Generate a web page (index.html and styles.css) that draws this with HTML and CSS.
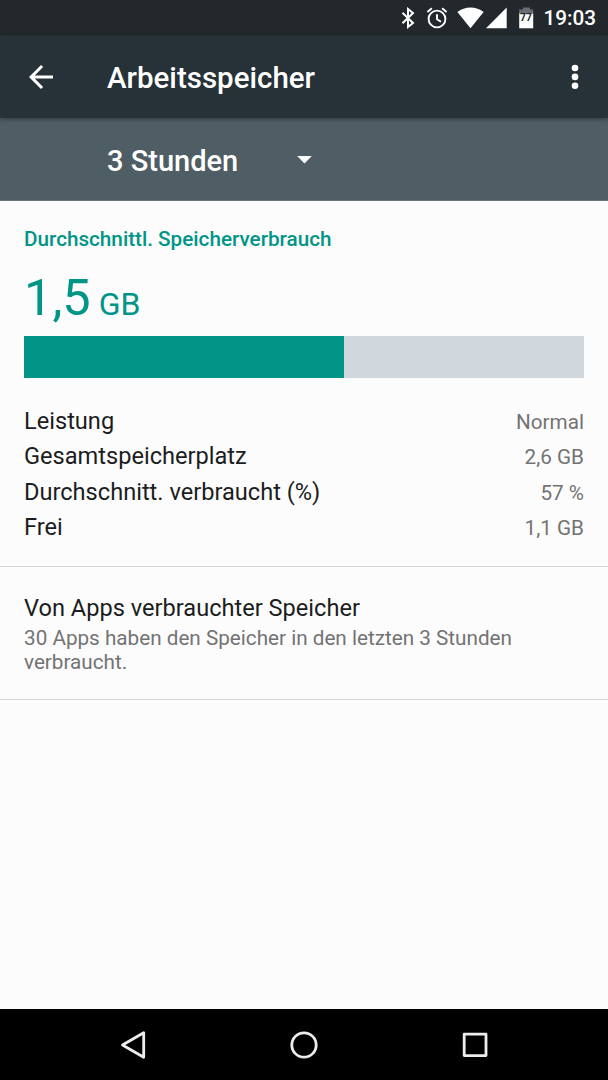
FILE: index.html
```html
<!DOCTYPE html>
<html lang="de">
<head>
    <meta charset="UTF-8">
    <meta name="viewport" content="width=device-width, initial-scale=1.0">
    <title>Arbeitsspeicher</title>
    <link rel="stylesheet" href="styles.css">
</head>
<body>

    <div class="statusbar">
        <svg class="bluetooth" width="14" height="22" viewBox="0 0 14 22" fill="none" stroke="#fff" stroke-width="2">
            <path d="M1.500 5.800l10.500 10.200-5 4V2l5 4L1.500 16.200"/>
        </svg>
        <svg class="alarm" width="22" height="22" viewBox="0 0 22 22" fill="none" stroke="#fff" stroke-width="1.9">
            <circle cx="11" cy="12" r="8.4"/>
            <path d="M11 7.3v5l4 2.4M1.4 5l4.500-3.700M20.600 5l-4.500-3.700"/>
        </svg>
        <svg class="wifi" width="27" height="22" viewBox="0 0 27 22" fill="#fff">
            <path d="M13.500 21.300L.4 5C4.200 2.200 8.600.6 13.500.6S22.800 2.200 26.600 5z"/>
        </svg>
        <svg class="signal" width="21" height="22" viewBox="0 0 21 22" fill="#fff">
            <path d="M0 21.300L20.700.6v20.700z"/>
        </svg>
        <div class="battery">
            <svg width="15" height="22" viewBox="0 0 15 22">
                <path d="M4 .5h7v2h3.200V7H.2V2.500H4z" fill="#6b6e70"/>
                <path d="M.2 6.500h14v14.800H.2z" fill="#fff"/>
            </svg>
            <span>77</span>
        </div>
        <span class="clock">19:03</span>
    </div>

    <div class="toolbar">
        <svg class="back" width="36" height="36" viewBox="0 0 24 24" fill="#fff">
            <path d="M20 11H7.830l5.590-5.590L12 4l-8 8 8 8 1.410-1.410L7.830 13H20v-2z"/>
        </svg>
        <h1>Arbeitsspeicher</h1>
        <svg class="more" width="8" height="26" viewBox="0 0 8 26" fill="#fff">
            <circle cx="4" cy="4" r="3.300"/>
            <circle cx="4" cy="12.900" r="3.300"/>
            <circle cx="4" cy="21.800" r="3.300"/>
        </svg>
    </div>

    <div class="spinner">
        <span>3 Stunden</span>
        <svg width="15" height="8" viewBox="0 0 15 8" fill="#fff">
            <path d="M.2 0h14.600L7.500 7.500z"/>
        </svg>
    </div>

    <main>
        <section class="verbrauch">
            <h2>Durchschnittl. Speicherverbrauch</h2>
            <div class="wert">1,5<small>GB</small></div>
            <div class="balken"><div class="belegt" style="width: 57.1%"></div></div>

            <ul class="liste">
                <li><span>Leistung</span><span class="info">Normal</span></li>
                <li><span>Gesamtspeicherplatz</span><span class="info">2,6 GB</span></li>
                <li><span>Durchschnitt. verbraucht (%)</span><span class="info">57 %</span></li>
                <li><span>Frei</span><span class="info">1,1 GB</span></li>
            </ul>
        </section>

        <section class="apps">
            <h3>Von Apps verbrauchter Speicher</h3>
            <p>30 Apps haben den Speicher in den letzten 3 Stunden verbraucht.</p>
        </section>
    </main>

    <nav class="navbar">
        <svg width="26" height="30" viewBox="0 0 26 30">
            <path d="M2.500 15L23.700 2.700v24.600z"/>
        </svg>
        <svg width="30" height="30" viewBox="0 0 30 30">
            <circle cx="15" cy="15" r="12.200"/>
        </svg>
        <svg width="26" height="30" viewBox="0 0 26 30">
            <path d="M2.200 4.200h21.800v21.400H2.200z"/>
        </svg>
    </nav>

</body>
</html>
```
FILE: styles.css
```css
* {
    box-sizing: border-box;
}

body {
    margin: 0;
    height: 1080px;
    display: flex;
    flex-direction: column;
    font-family: Roboto, "Liberation Sans", sans-serif;
    background-color: #fcfcfc;
    color: #1b1d1e;
    overflow: hidden;
}

h1, h2, h3, p, ul {
    margin: 0;
    padding: 0;
}

svg {
    display: block;
    flex-shrink: 0;
}

.statusbar {
    height: 35px;
    display: flex;
    align-items: center;
    justify-content: flex-end;
    padding: 1px 12px 0 0;
    background-color: #22282b;
    color: white;
}

.alarm {
    margin-left: 11px;
}

.wifi {
    margin-left: 9px;
}

.signal {
    margin-left: 2px;
}

.battery {
    position: relative;
    margin-left: 12px;
}

.battery span {
    position: absolute;
    left: 0;
    top: 5px;
    width: 15px;
    font-size: 10.500px;
    line-height: 12px;
    font-weight: bold;
    text-align: center;
    color: #22282b;
}

.clock {
    margin-left: 10px;
    font-size: 20.700px;
    font-weight: 500;
    line-height: 35px;
}

.toolbar {
    position: relative;
    z-index: 1;
    height: 83px;
    display: flex;
    align-items: center;
    padding: 0 29px 0 23px;
    background-color: #273238;
    color: white;
    box-shadow: 0 1px 4px rgba(0, 0, 0, 0.4);
}

.toolbar h1 {
    flex: 1;
    margin-left: 48px;
    padding-top: 2px;
    font-size: 29.500px;
    font-weight: 500;
    line-height: 36px;
}

.spinner {
    height: 83px;
    display: flex;
    align-items: center;
    padding: 2px 0 0 107px;
    background-color: #4f5d64;
    border-bottom: 1px solid #6c787e;
    color: white;
    font-size: 29px;
    font-weight: 500;
}

.spinner span {
    padding-top: 2px;
}

.spinner svg {
    margin-left: 59px;
}

main {
    flex: 1;
}

.verbrauch {
    height: 366px;
    padding: 25px 24px 0;
    border-bottom: 1px solid #d5d6d6;
}

.verbrauch h2 {
    font-size: 20.700px;
    font-weight: 500;
    line-height: 26px;
    color: #009587;
}

.wert {
    height: 84px;
    padding-top: 16px;
    font-size: 50.500px;
    line-height: 60px;
    color: #009587;
}

.wert small {
    margin-left: 8px;
    font-size: 32px;
}

.balken {
    height: 42px;
    background-color: #cfd7dc;
}

.belegt {
    height: 100%;
    background-color: #009587;
}

.liste {
    margin-top: 26px;
    list-style: none;
}

.liste li {
    height: 35.400px;
    display: flex;
    justify-content: space-between;
    align-items: baseline;
    font-size: 23.600px;
    line-height: 35.400px;
}

.liste .info {
    font-size: 20.700px;
    color: #737373;
}

.apps {
    height: 133px;
    padding: 26px 24px 0;
    border-bottom: 1px solid #d5d6d6;
}

.apps h3 {
    font-size: 23.600px;
    font-weight: 400;
    line-height: 30px;
}

.apps p {
    margin-top: 3px;
    font-size: 20.700px;
    line-height: 24px;
    color: #737373;
}

.navbar {
    height: 71px;
    display: flex;
    align-items: center;
    justify-content: space-between;
    padding: 0 120px;
    background-color: black;
}

.navbar svg {
    fill: none;
    stroke: #eceeee;
    stroke-width: 2.800;
    stroke-linejoin: round;
}
```
